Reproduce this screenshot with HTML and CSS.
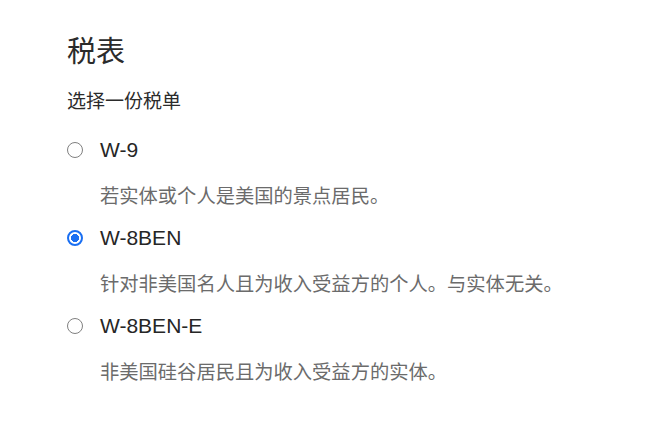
FILE: index.html
```html
<!DOCTYPE html>
<html lang="zh-CN">
<head>
<meta charset="utf-8">
<title>税表</title>
<link rel="stylesheet" href="styles.css">
</head>
<body>
<main class="panel">
  <h1 class="title">税表</h1>
  <p class="subtitle">选择一份税单</p>
  <div class="options">
    <label class="option">
      <input type="radio" name="form" class="radio">
      <span class="label">W-9</span>
    </label>
    <p class="desc">若实体或个人是美国的景点居民。</p>
    <label class="option">
      <input type="radio" name="form" class="radio" checked>
      <span class="label">W-8BEN</span>
    </label>
    <p class="desc">针对非美国名人且为收入受益方的个人。与实体无关。</p>
    <label class="option">
      <input type="radio" name="form" class="radio">
      <span class="label">W-8BEN-E</span>
    </label>
    <p class="desc">非美国硅谷居民且为收入受益方的实体。</p>
  </div>
</main>
</body>
</html>
```

FILE: styles.css
```css
html, body {
  margin: 0;
  padding: 0;
  background: #ffffff;
}
body {
  font-family: "Liberation Sans", "Noto Sans CJK SC", sans-serif;
  color: #262626;
}
.panel {
  padding: 32px 0 0 67px;
}
.title {
  margin: 0;
  font-size: 29px;
  font-weight: 400;
  line-height: 40px;
  color: #2b2b2b;
}
.subtitle {
  margin: 8px 0 0;
  font-size: 19px;
  line-height: 44px;
  color: #2b2b2b;
}
.options {
  display: flex;
  flex-direction: column;
  margin-top: 4px;
}
.option {
  display: flex;
  align-items: center;
  height: 44px;
  gap: 17px;
}
.radio {
  appearance: none;
  -webkit-appearance: none;
  margin: 0;
  width: 16px;
  height: 16px;
  border: 1.5px solid #808080;
  border-radius: 50%;
  box-sizing: border-box;
  background: #fff;
  flex: none;
}
.radio:checked {
  border: 2px solid #1a6ff2;
  background: radial-gradient(circle, #1a6ff2 0 3.8px, #fff 4.3px);
}
.label {
  font-size: 21px;
  color: #262626;
}
.desc {
  margin: 0 0 0 33px;
  height: 44px;
  box-sizing: border-box;
  padding-top: 6px;
  line-height: 38px;
  font-size: 19.3px;
  color: #6b6b6b;
}
```
